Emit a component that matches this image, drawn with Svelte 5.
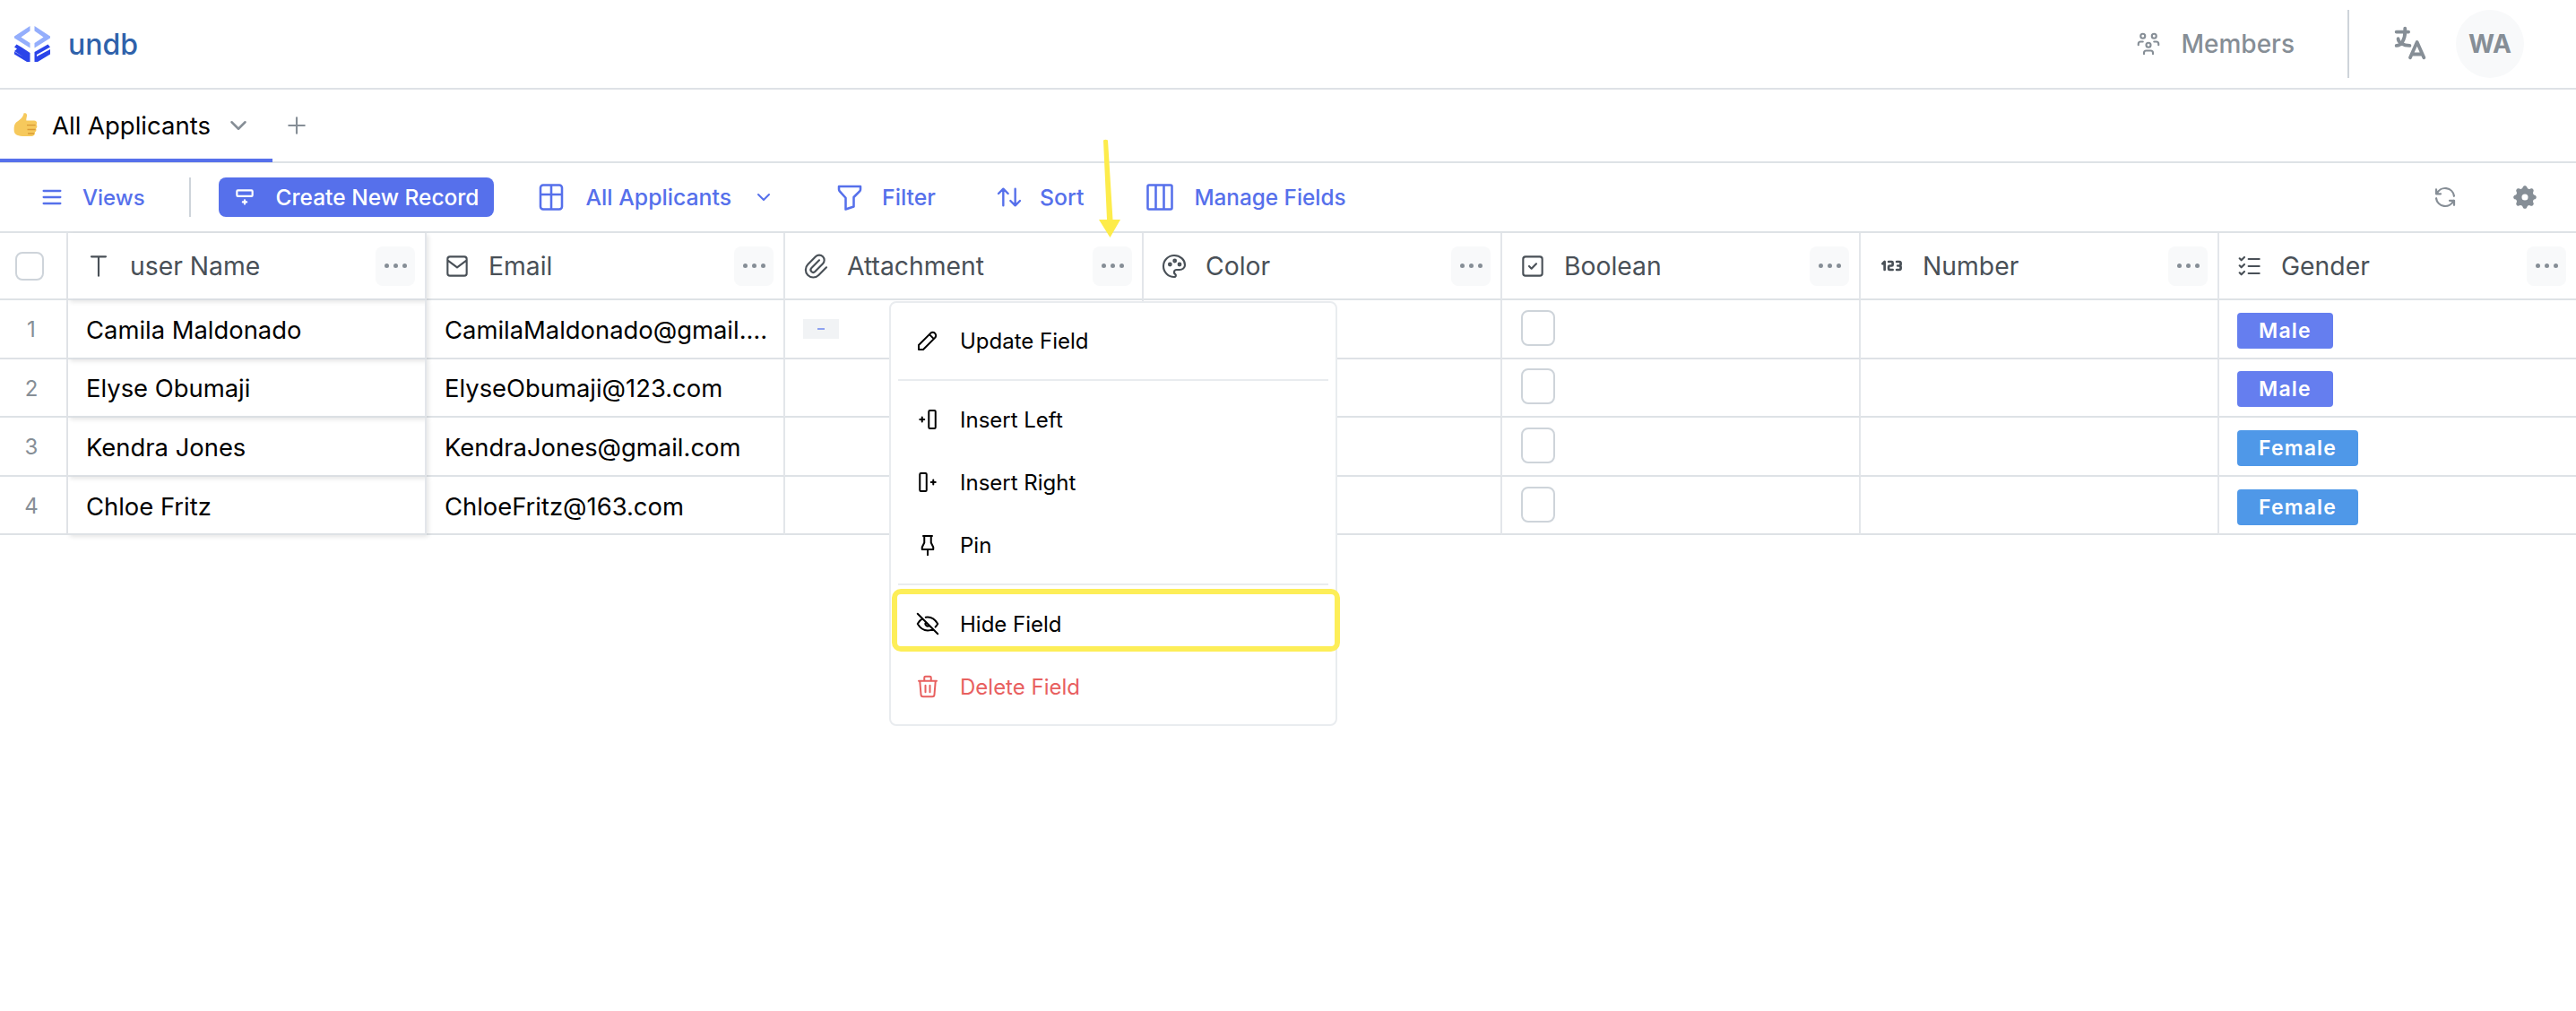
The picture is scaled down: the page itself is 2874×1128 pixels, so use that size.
<script>
  const paths = {
    menu: "M4 6h16 M4 12h16 M4 18h16",
    rowInsert: "M20 6v4a1 1 0 0 1 -1 1h-14a1 1 0 0 1 -1 -1v-4a1 1 0 0 1 1 -1h14a1 1 0 0 1 1 1z M12 15v4 M14 17h-4",
    table: "M6 3h12a2 2 0 0 1 2 2v14a2 2 0 0 1 -2 2h-12a2 2 0 0 1 -2 -2v-14a2 2 0 0 1 2 -2z M4 10h16 M12 3v18",
    chevron: "M6 9l6 6l6 -6",
    plus: "M12 5v14 M5 12h14",
    filter: "M4 4h16v2.172a2 2 0 0 1 -.586 1.414l-4.414 4.414v7l-6 2v-8.5l-4.48 -4.928a2 2 0 0 1 -.52 -1.345v-2.227z",
    sort: "M3 9l4 -4l4 4m-4 -4v14 M21 15l-4 4l-4 -4m4 4v-14",
    columns: "M4 3h16a1 1 0 0 1 1 1v16a1 1 0 0 1 -1 1h-16a1 1 0 0 1 -1 -1v-16a1 1 0 0 1 1 -1z M9 3v18 M15 3v18",
    refresh: "M20 11a8.1 8.1 0 0 0 -15.5 -2m-.5 -4v4h4 M4 13a8.1 8.1 0 0 0 15.5 2m.5 4v-4h-4",
    language: "M4 5h7 M9 3v2c0 4.418 -2.239 8 -5 8 M5 9c0 2.144 2.952 3.908 6.7 4 M12 20l4 -9l4 9 M19.1 18h-6.2",
    users: "M10 13a2 2 0 1 0 4 0a2 2 0 0 0 -4 0 M8 21v-1a2 2 0 0 1 2 -2h4a2 2 0 0 1 2 2v1 M15 5a2 2 0 1 0 4 0a2 2 0 0 0 -4 0 M17 10h2a2 2 0 0 1 2 2v1 M5 5a2 2 0 1 0 4 0a2 2 0 0 0 -4 0 M3 13v-1a2 2 0 0 1 2 -2h2",
    text: "M6 4h12 M12 4v16",
    mail: "M6 4h12a2 2 0 0 1 2 2v12a2 2 0 0 1 -2 2h-12a2 2 0 0 1 -2 -2v-12a2 2 0 0 1 2 -2z M4 7l8 6l8 -6",
    clip: "M15 7l-6.5 6.5a1.5 1.5 0 0 0 3 3l6.5 -6.5a3 3 0 0 0 -6 -6l-6.5 6.5a4.5 4.5 0 0 0 9 9l6.5 -6.5",
    palette: "M12 21a9 9 0 0 1 0 -18c4.97 0 9 3.582 9 8c0 1.06 -.474 2.078 -1.318 2.828c-.844 .75 -1.989 1.172 -3.182 1.172h-2.5a2 2 0 0 0 -1 3.75a1.3 1.3 0 0 1 -1 2.25 M7.5 10.5a1 1 0 1 0 2 0a1 1 0 1 0 -2 0 M11.5 7.5a1 1 0 1 0 2 0a1 1 0 1 0 -2 0 M15.5 10.5a1 1 0 1 0 2 0a1 1 0 1 0 -2 0",
    check: "M6 4h12a2 2 0 0 1 2 2v12a2 2 0 0 1 -2 2h-12a2 2 0 0 1 -2 -2v-12a2 2 0 0 1 2 -2z M9 12l2 2l4 -4",
    number: "M3 10l2 -2v8 M9 8h3a1 1 0 0 1 1 1v2a1 1 0 0 1 -1 1h-2a1 1 0 0 0 -1 1v2a1 1 0 0 0 1 1h3 M17 8h2.5a1.5 1.5 0 0 1 1.5 1.5v1a1.5 1.5 0 0 1 -1.5 1.5h-1.5h1.5a1.5 1.5 0 0 1 1.5 1.5v1a1.5 1.5 0 0 1 -1.5 1.5h-2.5",
    list: "M3.5 5.5l1.5 1.5l2.5 -2.5 M3.5 11.5l1.5 1.5l2.5 -2.5 M3.5 17.5l1.5 1.5l2.5 -2.5 M11 6h9 M11 12h9 M11 18h9",
    pencil: "M4 20h4l10.5 -10.5a1.5 1.5 0 0 0 -4 -4l-10.5 10.5v4 M13.5 6.5l4 4",
    insertLeft: "M14 4h4a1 1 0 0 1 1 1v14a1 1 0 0 1 -1 1h-4a1 1 0 0 1 -1 -1v-14a1 1 0 0 1 1 -1z M5 12h4 M7 10v4",
    insertRight: "M6 4h4a1 1 0 0 1 1 1v14a1 1 0 0 1 -1 1h-4a1 1 0 0 1 -1 -1v-14a1 1 0 0 1 1 -1z M15 12h4 M17 10v4",
    pin: "M9 4v6l-2 4v2h10v-2l-2 -4v-6 M12 16v5 M8 4h8",
    eyeOff: "M10.585 10.587a2 2 0 0 0 2.829 2.828 M16.681 16.673a8.717 8.717 0 0 1 -4.681 1.327c-3.6 0 -6.6 -2 -9 -6c1.272 -2.12 2.712 -3.678 4.32 -4.674m2.86 -1.146a9.055 9.055 0 0 1 1.82 -.18c3.6 0 6.6 2 9 6c-.666 1.11 -1.379 2.067 -2.138 2.87 M3 3l18 18",
    trash: "M4 7h16 M10 11v6 M14 11v6 M5 7l1 12a2 2 0 0 0 2 2h8a2 2 0 0 0 2 -2l1 -12 M9 7v-3a1 1 0 0 1 1 -1h4a1 1 0 0 1 1 1v3"
  };

  const fields = [
    { name: "user Name", icon: "text" },
    { name: "Email", icon: "mail" },
    { name: "Attachment", icon: "clip" },
    { name: "Color", icon: "palette" },
    { name: "Boolean", icon: "check" },
    { name: "Number", icon: "number", size: 27, width: 2.4 },
    { name: "Gender", icon: "list" }
  ];

  const records = [
    { name: "Camila Maldonado", email: "CamilaMaldonado@gmail.com", file: true, gender: "Male" },
    { name: "Elyse Obumaji", email: "ElyseObumaji@123.com", gender: "Male" },
    { name: "Kendra Jones", email: "KendraJones@gmail.com", gender: "Female" },
    { name: "Chloe Fritz", email: "ChloeFritz@163.com", gender: "Female" }
  ];

  const groups = [
    [{ label: "Update Field", icon: "pencil" }],
    [
      { label: "Insert Left", icon: "insertLeft" },
      { label: "Insert Right", icon: "insertRight" },
      { label: "Pin", icon: "pin" }
    ],
    [
      { label: "Hide Field", icon: "eyeOff", marked: true },
      { label: "Delete Field", icon: "trash", danger: true }
    ]
  ];
</script>

{#snippet icon(name, size = 24, width = 2)}
  <svg class="icon" viewBox="0 0 24 24" style="width:{size}px;height:{size}px;stroke-width:{width}">
    <path d={paths[name]} />
  </svg>
{/snippet}

<div class="page">
  <header class="top">
    <svg class="logo" viewBox="0 0 40 40">
      <path class="light" d="M17.500 0v5.500L7.500 12.500l10 6.500v5.500L0 13.500v-2z" />
      <path class="light" d="M22.500 0v5.500l10 7-10 6.500v5.500L40 13.500v-2z" />
      <path class="dark" d="M2.500 20.500l6 3.500 9 6v10h-3.500L0 31.500v-3l10 6-10-6.500 3-2.500-3-2z" />
      <path class="dark" d="M37.500 20.500l2.500 3-15 8.500v2l15-8v5.500L26 40h-3.500V29z" />
    </svg>
    <span class="brand">undb</span>
    <div class="members">
      {@render icon("users", 30, 1.7)}
      <span>Members</span>
    </div>
    <div class="top-divider"></div>
    <span class="lang">{@render icon("language", 46, 2)}</span>
    <div class="avatar">WA</div>
  </header>

  <nav class="tabs">
    <div class="tab">
      <svg class="thumb" viewBox="0 0 28 28">
        <path d="M11.500 1.200c1.800-.6 2.800.8 2.500 2.800-.3 1.800-.8 3.300-.6 4.800h8.200c3 .1 3.300 3 2.300 4.300 1.200 1.500.8 3.300-.4 4.200.7 1.600.1 3.100-1.100 3.800.4 2.300-1 4-3.300 4H9.500c-3.200 0-5.500-.9-6.900-1.800-1.500-1-2-2.700-2-4.900 0-3.700.4-6.300 3.200-8.300 2.800-2 6.500-4.700 7-8.900z" fill="#f6c95c" />
        <path d="M14 13.600h9 M14.500 18.200h8.500 M15 22.400h6.500" stroke="#d99a35" stroke-width="1.300" fill="none" />
      </svg>
      <span class="tab-name">All Applicants</span>
      <span class="tab-chevron">{@render icon("chevron", 30, 2)}</span>
    </div>
    <span class="tab-plus">{@render icon("plus", 30, 1.700)}</span>
  </nav>

  <div class="toolbar">
    <button class="tool views">{@render icon("menu", 28, 2)}<span>Views</span></button>
    <div class="tool-divider"></div>
    <button class="create">{@render icon("rowInsert", 26, 2)}<span>Create New Record</span></button>
    <button class="tool select">
      {@render icon("table", 36, 1.700)}<span>All Applicants</span>
      <span class="small-chevron">{@render icon("chevron", 24, 2)}</span>
    </button>
    <button class="tool filter">{@render icon("filter", 36, 1.700)}<span>Filter</span></button>
    <button class="tool sort">{@render icon("sort", 32, 1.800)}<span>Sort</span></button>
    <button class="tool manage">{@render icon("columns", 36, 1.700)}<span>Manage Fields</span></button>
    <div class="tool-right">
      <span class="refresh">{@render icon("refresh", 30, 1.800)}</span>
      <svg class="gear" viewBox="0 0 24 24">
        <path fill-rule="evenodd" d="M10.325 4.317c.426 -1.756 2.924 -1.756 3.350 0a1.724 1.724 0 0 0 2.573 1.066c1.543 -.94 3.310 .826 2.370 2.370a1.724 1.724 0 0 0 1.065 2.572c1.756 .426 1.756 2.924 0 3.350a1.724 1.724 0 0 0 -1.066 2.573c.94 1.543 -.826 3.310 -2.370 2.370a1.724 1.724 0 0 0 -2.572 1.065c-.426 1.756 -2.924 1.756 -3.350 0a1.724 1.724 0 0 0 -2.573 -1.066c-1.543 .94 -3.310 -.826 -2.370 -2.370a1.724 1.724 0 0 0 -1.065 -2.572c-1.756 -.426 -1.756 -2.924 0 -3.350a1.724 1.724 0 0 0 1.066 -2.573c-.94 -1.543 .826 -3.310 2.370 -2.370c1 .608 2.296 .07 2.572 -1.065z M12 9.500a2.500 2.500 0 1 0 0 5a2.500 2.500 0 0 0 0 -5z" />
      </svg>
    </div>
  </div>

  <div class="table">
    <div class="cell corner"><span class="checkbox small"></span></div>
    {#each fields as field, i}
      <div class="cell head" class:frozen={i === 0}>
        <span class="head-icon">{@render icon(field.icon, field.size ?? 32, field.width ?? 1.600)}</span>
        <span class="head-name">{field.name}</span>
        <span class="more"><i></i><i></i><i></i></span>
      </div>
    {/each}

    {#each records as record, r}
      <div class="cell index">{r + 1}</div>
      <div class="cell text frozen">{record.name}</div>
      <div class="cell text email"><span class="clip">{record.email}</span></div>
      <div class="cell">
        {#if record.file}<span class="file"><b></b></span>{/if}
      </div>
      <div class="cell"></div>
      <div class="cell"><span class="checkbox"></span></div>
      <div class="cell"></div>
      <div class="cell">
        <span class="tag" class:female={record.gender === "Female"}>{record.gender}</span>
      </div>
    {/each}
  </div>

  <div class="menu">
    {#each groups as group, g}
      {#if g > 0}<div class="menu-divider"></div>{/if}
      {#each group as item}
        <div class="item" class:danger={item.danger} class:marked={item.marked}>
          {@render icon(item.icon, 30, 1.600)}
          <span>{item.label}</span>
        </div>
      {/each}
    {/each}
  </div>

  <svg class="arrow" viewBox="0 0 30 112">
    <path d="M7 1.500 Q9.500 0 12 1.500 L17.500 90 L26 90 L14.500 110 L2 90 L11 90 Z" />
  </svg>
</div>

<style>
  :global(body) {
    margin: 0;
    background: #fff;
  }
  .page {
    position: relative;
    width: 2874px;
    height: 1128px;
    overflow: hidden;
    font-family: Inter, "Liberation Sans", sans-serif;
    color: #000;
  }
  .icon {
    display: block;
    flex: none;
    fill: none;
    stroke: currentColor;
    stroke-linecap: round;
    stroke-linejoin: round;
  }
  .top {
    display: flex;
    align-items: center;
    box-sizing: border-box;
    height: 100px;
    padding: 0 58px 0 16px;
    border-bottom: 2px solid #dee2e6;
  }
  .logo {
    width: 40px;
    height: 40px;
  }
  .logo .light {
    fill: #94aefc;
  }
  .logo .dark {
    fill: #2b44e9;
  }
  .brand {
    margin-left: 20px;
    font-size: 32px;
    font-weight: 500;
    color: #2f62ab;
  }
  .members {
    display: flex;
    align-items: center;
    gap: 21px;
    margin-left: auto;
    font-size: 28px;
    font-weight: 500;
    color: #868e96;
  }
  .top-divider {
    width: 2px;
    height: 76px;
    margin-left: 59px;
    background: #ced4da;
  }
  .lang {
    margin-left: 45px;
    color: #868e96;
  }
  .avatar {
    display: flex;
    align-items: center;
    justify-content: center;
    width: 76px;
    height: 76px;
    margin-left: 28px;
    border-radius: 50%;
    background: #f8f9fa;
    font-size: 28px;
    font-weight: 700;
    color: #868e96;
  }
  .tabs {
    display: flex;
    align-items: center;
    box-sizing: border-box;
    height: 82px;
    border-bottom: 2px solid #dee2e6;
  }
  .tab {
    display: flex;
    align-items: center;
    box-sizing: border-box;
    width: 304px;
    height: 82px;
    padding: 4px 0 0 15px;
    border-bottom: 4px solid #5670eb;
  }
  .thumb {
    width: 30px;
    height: 30px;
  }
  .tab-name {
    margin-left: 13px;
    font-size: 27.500px;
    color: #000;
  }
  .tab-chevron {
    margin-left: 16px;
    color: #868e96;
  }
  .tab-plus {
    margin-left: 12px;
    color: #868e96;
  }
  .toolbar {
    display: flex;
    align-items: center;
    box-sizing: border-box;
    height: 78px;
    padding: 0 40px 0 44px;
    border-bottom: 2px solid #dee2e6;
  }
  button {
    display: flex;
    align-items: center;
    padding: 0;
    border: 0;
    background: none;
    font: inherit;
    font-size: 24.800px;
    font-weight: 500;
  }
  .tool {
    color: #5670eb;
  }
  .views {
    gap: 20px;
    font-size: 24px;
  }
  .tool-divider {
    width: 2px;
    height: 44px;
    margin-left: 49px;
    background: #ced4da;
  }
  .create {
    gap: 22px;
    height: 44px;
    margin-left: 31px;
    padding: 0 16px;
    border-radius: 8px;
    background: #5670eb;
    font-size: 24.500px;
    color: #fff;
  }
  .select {
    gap: 21px;
    margin-left: 46px;
  }
  .small-chevron {
    margin-left: 3px;
  }
  .filter {
    gap: 18px;
    margin-left: 66px;
  }
  .sort {
    gap: 18px;
    margin-left: 66px;
  }
  .manage {
    gap: 20px;
    margin-left: 67px;
    font-size: 24.300px;
  }
  .tool-right {
    display: flex;
    align-items: center;
    gap: 57px;
    margin-left: auto;
    color: #868e96;
  }
  .gear {
    width: 34px;
    height: 34px;
    fill: #868e96;
  }
  .table {
    display: grid;
    grid-template-columns: 76px repeat(6, 400px) 398px;
    grid-template-rows: 75px repeat(4, 65.600px);
  }
  .cell {
    display: flex;
    align-items: center;
    box-sizing: border-box;
    min-width: 0;
    padding: 0 20px;
    border-right: 2px solid #e3e6ea;
    border-bottom: 2px solid #dee2e6;
  }
  .cell:nth-child(8n) {
    border-right: 0;
  }
  .corner {
    padding: 0 0 0 17px;
  }
  .head {
    padding-left: 18px;
    font-size: 28.300px;
    color: #495057;
  }
  .head-icon {
    display: flex;
    align-items: center;
    justify-content: center;
    width: 32px;
    margin-right: 19px;
  }
  .head-name {
    flex: 1;
  }
  .more {
    display: flex;
    align-items: center;
    justify-content: center;
    gap: 5px;
    width: 44px;
    height: 44px;
    margin-right: -9px;
    border-radius: 8px;
    background: #f8f9fa;
  }
  .more i {
    width: 5px;
    height: 5px;
    border-radius: 50%;
    background: #868e96;
  }
  .frozen {
    position: relative;
    box-shadow: 2px 2px 5px rgba(0, 0, 0, 0.1);
  }
  .index {
    justify-content: center;
    padding: 2px 4px 0 0;
    font-size: 24px;
    color: #868e96;
  }
  .text {
    padding-top: 2px;
    font-size: 27.400px;
    color: #000;
  }
  .email {
    padding-right: 14px;
  }
  .clip {
    overflow: hidden;
    white-space: nowrap;
    text-overflow: ellipsis;
  }
  .checkbox {
    display: block;
    box-sizing: border-box;
    width: 38px;
    height: 40px;
    margin: -2px 0 0 1px;
    border: 2px solid #ced4da;
    border-radius: 8px;
    background: #fff;
  }
  .checkbox.small {
    width: 32px;
    height: 32px;
    margin: 0;
  }
  .file {
    display: flex;
    align-items: center;
    justify-content: center;
    width: 40px;
    height: 22px;
    background: #f1f3f5;
  }
  .file b {
    width: 8px;
    height: 2px;
    background: #8ea2f0;
  }
  .tag {
    display: flex;
    align-items: center;
    height: 40px;
    margin-top: 4px;
    padding: 0 24px;
    border-radius: 4px;
    background: #657eef;
    font-size: 23px;
    font-weight: 600;
    letter-spacing: 1.200px;
    color: #fff;
  }
  .tag.female {
    background: #4f98e8;
  }
  .menu {
    position: absolute;
    top: 336px;
    left: 992px;
    box-sizing: border-box;
    width: 500px;
    height: 474px;
    padding: 7px 8px;
    border: 2px solid #e9ecef;
    border-radius: 8px;
    background: #fff;
  }
  .item {
    position: relative;
    display: flex;
    align-items: center;
    gap: 21px;
    height: 70px;
    padding-left: 18px;
    font-size: 24px;
    color: #000;
  }
  .item.danger {
    color: #e8605f;
  }
  .item.marked::after {
    content: "";
    position: absolute;
    top: -4px;
    right: -13px;
    bottom: 4px;
    left: -7px;
    border: 6px solid #fdee58;
    border-radius: 10px;
  }
  .menu-divider {
    height: 2px;
    margin: 8px 0;
    background: #e9ecef;
  }
  .arrow {
    position: absolute;
    top: 155px;
    left: 1224px;
    width: 30px;
    height: 112px;
  }
  .arrow path {
    fill: #fdec4b;
  }
</style>
